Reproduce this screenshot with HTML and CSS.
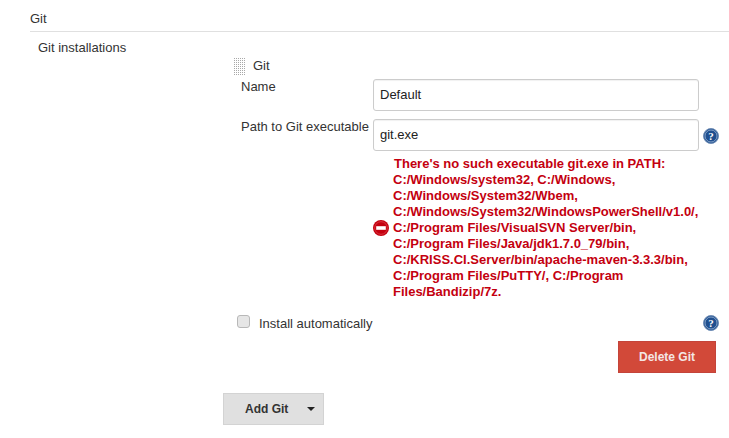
FILE: index.html
```html
<!DOCTYPE html>
<html lang="en">
<head>
<meta charset="utf-8">
<title>Git</title>
<link rel="stylesheet" href="styles.css">
</head>
<body>
<section class="section">
  <h2 class="section-title">Git</h2>
  <div class="installations">
    <div class="installations-label">Git installations</div>
    <div class="installations-body">
      <div class="tool">
        <div class="tool-head">
          <svg class="handle" width="12" height="18" viewBox="0 0 12 18">
            <defs><pattern id="dots" width="2" height="2" patternUnits="userSpaceOnUse"><rect width="1" height="1" fill="#a8a8a8"/></pattern></defs>
            <rect width="12" height="18" fill="url(#dots)"/>
          </svg>
          <span class="tool-name">Git</span>
        </div>
        <div class="field field-name">
          <label class="field-label">Name</label>
          <input class="text-input" type="text" value="Default">
        </div>
        <div class="field field-path">
          <label class="field-label">Path to Git executable</label>
          <input class="text-input" type="text" value="git.exe">
          <svg class="help" width="16" height="16" viewBox="0 0 16 16"><circle cx="8" cy="8" r="7.5" fill="#1f4f8f" stroke="#6f8db5"/><circle cx="8" cy="8" r="6" fill="none" stroke="#9db6d6" stroke-width=".8"/><text x="8" y="12" text-anchor="middle" class="help-mark">?</text></svg>
        </div>
        <div class="error">
          <svg class="error-icon" width="16" height="16" viewBox="0 0 16 16"><circle cx="8" cy="8" r="8" fill="#c4000f"/><circle cx="8" cy="8" r="6.3" fill="none" stroke="#de4a50" stroke-width=".7"/><rect x="3.2" y="6.2" width="9.6" height="3.6" fill="#fff"/></svg>
          <div class="error-text"><span class="error-first">There's no such executable git.exe in PATH:</span> C:/Windows/system32, C:/Windows, C:/Windows/System32/Wbem, C:/Windows/System32/WindowsPowerShell/v1.0/, C:/Program Files/VisualSVN Server/bin, C:/Program Files/Java/jdk1.7.0_79/bin, C:/KRISS.CI.Server/bin/apache-maven-3.3.3/bin, C:/Program Files/PuTTY/, C:/Program Files/Bandizip/7z.</div>
        </div>
        <div class="install">
          <label class="install-label"><input class="check" type="checkbox"><span class="install-text">Install automatically</span></label>
          <svg class="help" width="16" height="16" viewBox="0 0 16 16"><circle cx="8" cy="8" r="7.5" fill="#1f4f8f" stroke="#6f8db5"/><circle cx="8" cy="8" r="6" fill="none" stroke="#9db6d6" stroke-width=".8"/><text x="8" y="12" text-anchor="middle" class="help-mark">?</text></svg>
        </div>
        <div class="delete-row"><button class="btn-delete" type="button">Delete Git</button></div>
      </div>
      <button class="btn-add" type="button">Add Git<span class="caret"></span></button>
    </div>
  </div>
</section>
</body>
</html>
```

FILE: styles.css
```css
* { box-sizing: border-box; }
html, body { margin: 0; padding: 0; background: #fff; }
body {
  width: 729px;
  height: 438px;
  overflow: hidden;
  font-family: "Liberation Sans", Arial, sans-serif;
  font-size: 13px;
  color: #333;
}
.section { margin-left: 30px; }
.section-title {
  margin: 0;
  height: 32px;
  padding-top: 11px;
  font-size: 13px;
  line-height: 16px;
  font-weight: 400;
  color: #333;
  border-bottom: 1px solid #e0e0e0;
}
.installations { display: flex; }
.installations-label {
  width: 193px;
  padding: 8px 0 0 8px;
  line-height: 16px;
  flex: none;
}
.installations-body { flex: 1; padding-top: 26px; }
.tool { width: 493px; padding-left: 10px; }
.tool-head { display: flex; align-items: center; height: 18px; }
.handle { margin-left: 1px; flex: none; }
.tool-name { margin: -3px 0 0 7px; line-height: 16px; }
.field { display: flex; }
.field-name { margin-top: 3px; }
.field-path { margin-top: 8px; }
.field-label { width: 140px; padding: 0 0 0 8px; line-height: 16px; flex: none; white-space: nowrap; }
.text-input {
  width: 326px;
  height: 32px;
  flex: none;
  padding: 0 6px 2px;
  border: 1px solid #ccc;
  border-radius: 3px;
  font: inherit;
  color: #222;
  background: #fff;
  box-shadow: inset 0 1px 1px rgba(0,0,0,.06);
  outline: none;
}
.help { flex: none; }
.field-path .help { margin: 9px 0 0 4px; }
.error {
  display: flex;
  align-items: center;
  margin: 5px 0 0 140px;
  width: 326px;
  gap: 4px;
}
.error-icon { flex: none; }
.error-text {
  width: 306px;
  font-size: 13px;
  line-height: 16px;
  font-weight: 700;
  color: #c4000f;
}
.error-first { display: block; padding-left: 1px; }
.install {
  display: flex;
  justify-content: space-between;
  align-items: center;
  width: 486px;
  margin-top: 15px;
  height: 16px;
}
.install-label { display: flex; align-items: center; line-height: 16px; }
.install-text { position: relative; top: 1px; }
.check {
  appearance: none;
  width: 13px;
  height: 13px;
  margin: 0 9px 0 4px;
  position: relative;
  top: -2px;
  background: #e6e6e6;
  border: 1px solid #b8b8b8;
  border-radius: 3px;
}
.delete-row { display: flex; justify-content: flex-end; width: 483px; margin-top: 10px; }
.btn-delete {
  width: 98px;
  height: 32px;
  border: 1px solid #c4443a;
  background: #d24939;
  color: #f4e6e4;
  font: 700 12px "Liberation Sans", Arial, sans-serif;
  padding: 0;
}
.btn-add {
  display: flex;
  align-items: center;
  width: 101px;
  height: 32px;
  margin-top: 20px;
  padding: 0 0 0 21px;
  border: 1px solid #d3d3d3;
  background: #e0e0e0;
  color: #333;
  font: 700 12px "Liberation Sans", Arial, sans-serif;
}
.caret {
  margin-left: 19px;
  border-left: 4px solid transparent;
  border-right: 4px solid transparent;
  border-top: 4px solid #222;
}
.help-mark { font: 700 11px "Liberation Serif", serif; fill: #fff; }
```
